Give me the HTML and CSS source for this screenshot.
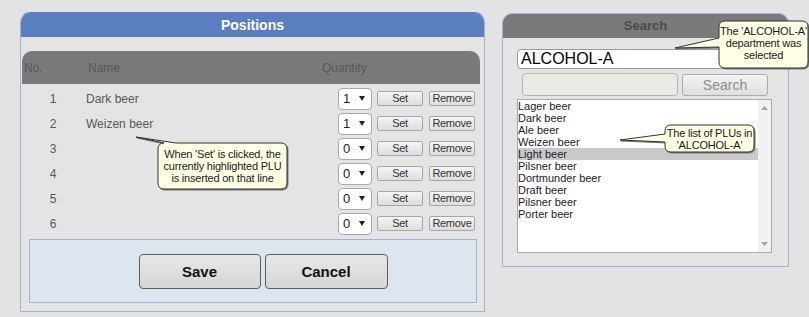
FILE: index.html
```html
<!DOCTYPE html>
<html lang="en">
<head>
  <meta charset="UTF-8">
  <title>Positions</title>
  <link rel="stylesheet" href="styles.css">
</head>
<body>
  <div class="page">
    <section class="panel positions">
      <h2 class="panel-title">Positions</h2>
      <div class="table-head">
        <span class="col-no">No.</span>
        <span class="col-name">Name</span>
        <span class="col-qty">Quantity</span>
      </div>

      <div class="rows">
        <div class="row">
          <span class="num">1</span><span class="name">Dark beer</span>
          <span class="qty"><span>1</span><svg class="caret" width="6" height="5" viewBox="0 0 6 5"><path d="M0 0H6L3 5Z"/></svg></span>
          <button class="btn-small">Set</button><button class="btn-small remove">Remove</button>
        </div>
        <div class="row">
          <span class="num">2</span><span class="name">Weizen beer</span>
          <span class="qty"><span>1</span><svg class="caret" width="6" height="5" viewBox="0 0 6 5"><path d="M0 0H6L3 5Z"/></svg></span>
          <button class="btn-small">Set</button><button class="btn-small remove">Remove</button>
        </div>
        <div class="row">
          <span class="num">3</span><span class="name"></span>
          <span class="qty"><span>0</span><svg class="caret" width="6" height="5" viewBox="0 0 6 5"><path d="M0 0H6L3 5Z"/></svg></span>
          <button class="btn-small">Set</button><button class="btn-small remove">Remove</button>
        </div>
        <div class="row">
          <span class="num">4</span><span class="name"></span>
          <span class="qty"><span>0</span><svg class="caret" width="6" height="5" viewBox="0 0 6 5"><path d="M0 0H6L3 5Z"/></svg></span>
          <button class="btn-small">Set</button><button class="btn-small remove">Remove</button>
        </div>
        <div class="row">
          <span class="num">5</span><span class="name"></span>
          <span class="qty"><span>0</span><svg class="caret" width="6" height="5" viewBox="0 0 6 5"><path d="M0 0H6L3 5Z"/></svg></span>
          <button class="btn-small">Set</button><button class="btn-small remove">Remove</button>
        </div>
        <div class="row">
          <span class="num">6</span><span class="name"></span>
          <span class="qty"><span>0</span><svg class="caret" width="6" height="5" viewBox="0 0 6 5"><path d="M0 0H6L3 5Z"/></svg></span>
          <button class="btn-small">Set</button><button class="btn-small remove">Remove</button>
        </div>
      </div>

      <div class="actions">
        <button class="btn-large">Save</button>
        <button class="btn-large">Cancel</button>
      </div>
    </section>

    <section class="panel search">
      <h2 class="search-title">Search</h2>
      <div class="search-body">
        <div class="dept">ALCOHOL-A</div>
        <div class="search-row">
          <div class="search-field"></div>
          <button class="search-btn">Search</button>
        </div>
        <div class="plu-list">
          <ul class="plu-items">
            <li>Lager beer</li>
            <li>Dark beer</li>
            <li>Ale beer</li>
            <li>Weizen beer</li>
            <li class="selected">Light beer</li>
            <li>Pilsner beer</li>
            <li>Dortmunder beer</li>
            <li>Draft beer</li>
            <li>Pilsner beer</li>
            <li>Porter beer</li>
          </ul>
          <div class="scrollbar">
            <svg width="7" height="4" viewBox="0 0 7 4"><path d="M0 4H7L3.5 0Z"/></svg>
            <svg width="7" height="4" viewBox="0 0 7 4"><path d="M0 0H7L3.5 4Z"/></svg>
          </div>
        </div>
      </div>
    </section>
  </div>

  <!-- annotation callouts -->
  <svg class="callout-layer" width="809" height="317" viewBox="0 0 809 317">
    <path d="M164 143L136 137L176 143H281Q287 143 287 149V183Q287 189 281 189H164Q158 189 158 183V149Q158 143 164 143Z"/>
    <path d="M719 38L675 48L719 47V62Q719 68 725 68H802Q808 68 808 62V27Q808 21 802 21H725Q719 21 719 27Z"/>
    <path d="M665 134L620 140L665 142V146Q665 152 671 152H748Q754 152 754 146V131Q754 125 748 125H671Q665 125 665 131Z"/>
  </svg>
  <div class="callout callout-set">When 'Set' is clicked, the<br>currently highlighted PLU<br>is inserted on that line</div>
  <div class="callout callout-dept">The 'ALCOHOL-A'<br>department was<br>selected</div>
  <div class="callout callout-list">The list of PLUs in<br>'ALCOHOL-A'</div>
</body>
</html>
```

FILE: styles.css
```css
body {
  margin: 0;
  width: 809px;
  height: 317px;
  overflow: hidden;
  position: relative;
  background: #e3e3e3;
  font-family: "Liberation Sans", Arial, sans-serif;
}

.page {
  display: flex;
  align-items: flex-start;
  padding: 12px 0 0 20px;
}

.panel {
  box-sizing: border-box;
  border: 1px solid #9fb3da;
  border-radius: 10px 10px 0 0;
  background: #e4e4e4;
}

/* left panel */
.positions {
  width: 465px;
  height: 300px;
  padding-bottom: 8px;
  display: flex;
  flex-direction: column;
  border-top-color: #5b7ec1;
}

.panel-title {
  margin: 0;
  height: 24px;
  line-height: 24px;
  background: #5b7ec1;
  border-radius: 9px 9px 0 0;
  color: #fff;
  font-size: 14px;
  font-weight: bold;
  text-align: center;
}

.table-head {
  display: flex;
  align-items: center;
  height: 33px;
  margin: 14px 4px 0 1px;
  background: #7a7a7a;
  border-radius: 10px 10px 0 0;
  color: #575757;
  font-size: 12px;
}

.col-no {
  width: 64px;
  padding-left: 2px;
}

.col-name {
  width: 234px;
}

.rows {
  margin-top: 2px;
}

.row {
  display: flex;
  align-items: center;
  height: 25px;
  padding-right: 9px;
  font-size: 12px;
  color: #585858;
}

.num {
  width: 64px;
  text-align: center;
}

.name {
  flex: 1;
  padding-left: 1px;
}

.qty {
  box-sizing: border-box;
  width: 34px;
  height: 22px;
  margin-right: 5px;
  padding: 0 6px 0 4px;
  display: flex;
  align-items: center;
  justify-content: space-between;
  background: #fff;
  border: 1px solid #a9a9a9;
  border-radius: 4px;
  font-size: 13px;
  color: #222;
}

.caret {
  fill: #222;
}

.btn-small {
  box-sizing: border-box;
  width: 46px;
  height: 15px;
  padding: 0;
  border: 1px solid #a6a6a6;
  border-radius: 2px;
  background: linear-gradient(#f5f5f5, #dddddd);
  font-family: "Liberation Sans", Arial, sans-serif;
  font-size: 11px;
  letter-spacing: -0.3px;
  line-height: 13px;
  color: #333;
}

.btn-small.remove {
  margin-left: 6px;
}

.actions {
  box-sizing: border-box;
  height: 64px;
  margin: 3px 7px 0 8px;
  padding-left: 20px;
  display: flex;
  align-items: center;
  justify-content: center;
  gap: 4px;
  background: #dde5ef;
  border: 1px solid #9fb3da;
}

.btn-large {
  box-sizing: border-box;
  width: 122px;
  height: 35px;
  border: 1px solid #5c5c5c;
  border-radius: 4px;
  background: linear-gradient(#e8e8e8, #d5d5d5);
  font-family: "Liberation Sans", Arial, sans-serif;
  font-size: 15px;
  font-weight: bold;
  color: #111;
}

.btn-large + .btn-large {
  width: 123px;
}

/* right panel */
.search {
  width: 287px;
  height: 254px;
  margin: 1px 0 0 17px;
}

.search-title {
  margin: 0;
  height: 24px;
  line-height: 24px;
  background: #7a7a7a;
  border-radius: 9px 9px 0 0;
  color: #4a4a4a;
  font-size: 13px;
  font-weight: bold;
  text-align: center;
}

.search-body {
  padding: 11px 15px 0 14px;
}

.dept {
  box-sizing: border-box;
  width: 254px;
  height: 20px;
  padding-left: 3px;
  background: #fff;
  border: 1px solid #9a9a9a;
  border-radius: 4px;
  font-size: 16px;
  line-height: 18px;
  color: #000;
}

.search-row {
  display: flex;
  align-items: center;
  gap: 4px;
  margin: 4px 0 0 5px;
}

.search-field {
  box-sizing: border-box;
  width: 156px;
  height: 23px;
  background: #ebeae3;
  border: 1px solid #b5b5b5;
  border-radius: 4px;
}

.search-btn {
  box-sizing: border-box;
  width: 86px;
  height: 22px;
  padding: 0;
  border: 1px solid #ababab;
  border-radius: 3px;
  background: linear-gradient(#f4f4f4, #dedede);
  font-family: "Liberation Sans", Arial, sans-serif;
  font-size: 14px;
  color: #8c8c8c;
}

.plu-list {
  box-sizing: border-box;
  display: flex;
  width: 255px;
  height: 154px;
  margin-top: 3px;
  background: #fff;
  border: 1px solid #ababab;
}

.plu-items {
  flex: 1;
  margin: 0;
  padding: 0;
  list-style: none;
  font-size: 11px;
  line-height: 12px;
  color: #1b1b2b;
}

.plu-items li.selected {
  background: #c9c9c9;
}

.scrollbar {
  width: 13px;
  padding: 6px 0;
  display: flex;
  flex-direction: column;
  justify-content: space-between;
  align-items: center;
  background: #f1f1f1;
}

.scrollbar svg {
  fill: #a5a5a5;
}

/* callouts */
.callout-layer {
  position: absolute;
  left: 0;
  top: 0;
  pointer-events: none;
}

.callout-layer path {
  fill: #ffffe3;
  stroke: #333;
  stroke-width: 1;
  filter: drop-shadow(1px 1px 0 #777);
}

.callout {
  position: absolute;
  display: flex;
  align-items: center;
  justify-content: center;
  text-align: center;
  white-space: nowrap;
  font-size: 11px;
  letter-spacing: -0.2px;
  line-height: 12px;
  color: #1a1a1a;
}

.callout-set {
  left: 158px;
  top: 143px;
  width: 129px;
  height: 46px;
}

.callout-dept {
  left: 719px;
  top: 21px;
  width: 89px;
  height: 44px;
}

.callout-list {
  left: 665px;
  top: 125px;
  width: 89px;
  height: 27px;
}
```
